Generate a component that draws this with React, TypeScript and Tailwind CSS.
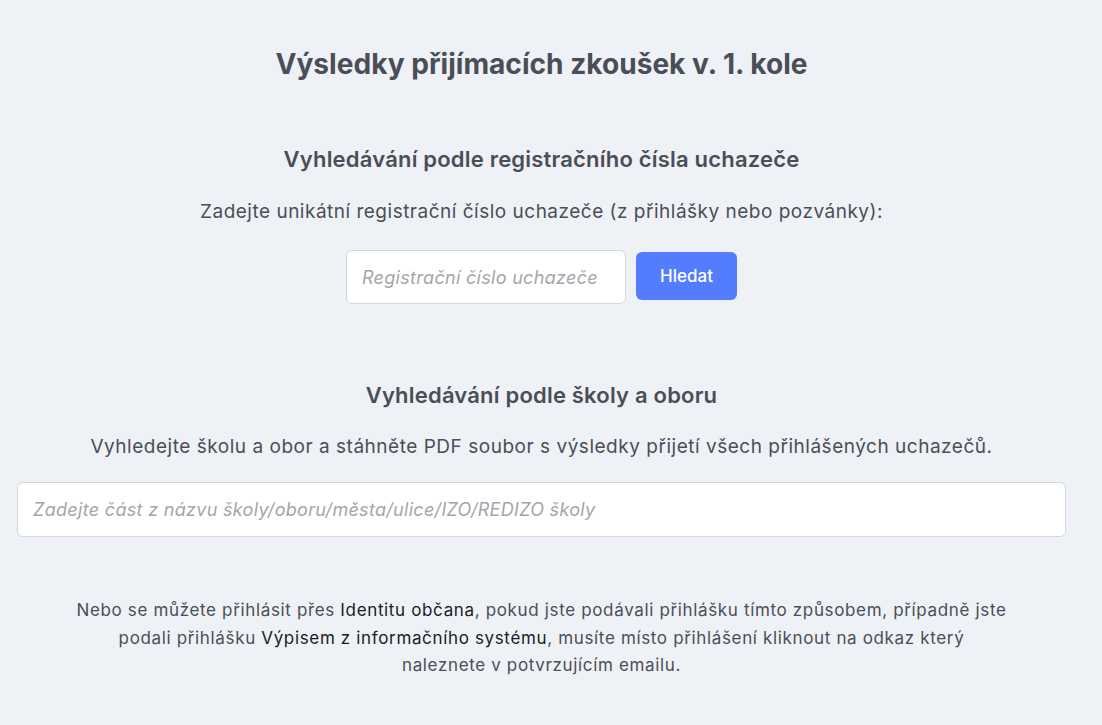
import React from 'react'

const body = { fontFamily: 'Inter, "Noto Sans", sans-serif' }

export default function App() {
  return (
    <div className="min-h-[725px] bg-[#eef1f6] text-[#4a4f57]" style={body}>
      <div className="w-[1083px] px-[17px] pt-[43px] text-center">
        <h1 className="text-[28.1px] font-bold leading-[42px] text-[#4a4f57]">
          Výsledky přijímacích zkoušek v. 1. kole
        </h1>

        {/* Search by registration number */}
        <h2 className="mt-[58px] text-[22px] font-semibold leading-[32px] tracking-[0.2px]">
          Vyhledávání podle registračního čísla uchazeče
        </h2>
        <p className="mt-[23px] text-[19px] leading-[28px] tracking-[0.5px]">
          Zadejte unikátní registrační číslo uchazeče (z přihlášky nebo pozvánky):
        </p>
        <div className="mt-[24px] flex items-start justify-center gap-[10px]">
          <input
            className="h-[54px] w-[280px] rounded-md border border-[#d4d8de] bg-white px-[15px] text-[18px] tracking-[0.3px] placeholder:italic placeholder:text-[#a3a6ab] outline-none"
            placeholder="Registrační číslo uchazeče"
          />
          <button className="mt-[2px] h-[48px] w-[101px] rounded-md bg-[#537cff] pt-[2px] text-[17px] font-medium text-white">
            Hledat
          </button>
        </div>

        {/* Search by school */}
        <h2 className="mt-[75px] text-[22px] font-semibold leading-[32px] tracking-[0.2px]">
          Vyhledávání podle školy a oboru
        </h2>
        <p className="mt-[22px] text-[19px] leading-[28px] tracking-[0.52px]">
          Vyhledejte školu a obor a stáhněte PDF soubor s výsledky přijetí všech přihlášených uchazečů.
        </p>
        <input
          className="mt-[21px] block h-[55px] w-full rounded-md border border-[#d4d8de] bg-white px-[15px] text-[18px] tracking-[0.3px] placeholder:italic placeholder:text-[#a3a6ab] outline-none"
          placeholder="Zadejte část z názvu školy/oboru/města/ulice/IZO/REDIZO školy"
        />

        <p className="mx-auto mt-[60px] text-[17px] leading-[27.5px] tracking-[0.65px]">
          Nebo se můžete přihlásit přes <span className="text-[#1a1c1f]">Identitu občana</span>, pokud jste podávali přihlášku tímto způsobem, případně jste
          <br />
          podali přihlášku <span className="text-[#1a1c1f]">Výpisem z informačního systému</span>, musíte místo přihlášení kliknout na odkaz který
          <br />
          naleznete v potvrzujícím emailu.
        </p>
      </div>
    </div>
  )
}
